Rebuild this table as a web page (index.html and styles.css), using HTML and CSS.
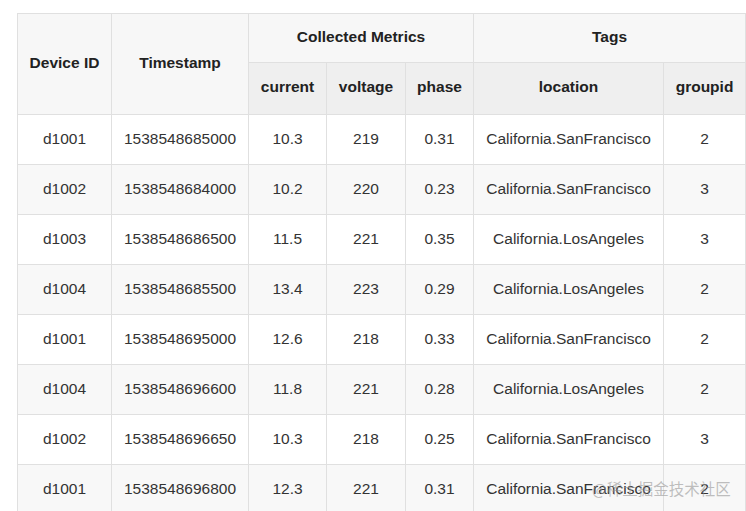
FILE: index.html
```html
<!DOCTYPE html>
<html lang="en">
<head>
<meta charset="utf-8">
<title>Metrics</title>
<link rel="stylesheet" href="styles.css">
</head>
<body>
<div class="page">
  <table class="metrics">
    <colgroup>
      <col class="c-id"><col class="c-ts"><col class="c-cur"><col class="c-volt"><col class="c-phase"><col class="c-loc"><col class="c-grp">
    </colgroup>
    <thead>
      <tr class="h1">
        <th rowspan="2">Device ID</th>
        <th rowspan="2">Timestamp</th>
        <th colspan="3">Collected Metrics</th>
        <th colspan="2">Tags</th>
      </tr>
      <tr class="h2">
        <th>current</th>
        <th>voltage</th>
        <th>phase</th>
        <th>location</th>
        <th>groupid</th>
      </tr>
    </thead>
    <tbody>
      <tr><td>d1001</td><td>1538548685000</td><td>10.3</td><td>219</td><td>0.31</td><td>California.SanFrancisco</td><td>2</td></tr>
      <tr><td>d1002</td><td>1538548684000</td><td>10.2</td><td>220</td><td>0.23</td><td>California.SanFrancisco</td><td>3</td></tr>
      <tr><td>d1003</td><td>1538548686500</td><td>11.5</td><td>221</td><td>0.35</td><td>California.LosAngeles</td><td>3</td></tr>
      <tr><td>d1004</td><td>1538548685500</td><td>13.4</td><td>223</td><td>0.29</td><td>California.LosAngeles</td><td>2</td></tr>
      <tr><td>d1001</td><td>1538548695000</td><td>12.6</td><td>218</td><td>0.33</td><td>California.SanFrancisco</td><td>2</td></tr>
      <tr><td>d1004</td><td>1538548696600</td><td>11.8</td><td>221</td><td>0.28</td><td>California.LosAngeles</td><td>2</td></tr>
      <tr><td>d1002</td><td>1538548696650</td><td>10.3</td><td>218</td><td>0.25</td><td>California.SanFrancisco</td><td>3</td></tr>
      <tr><td>d1001</td><td>1538548696800</td><td>12.3</td><td>221</td><td>0.31</td><td>California.SanFrancisco</td><td>2</td></tr>
    </tbody>
  </table>
  <div class="watermark">@稀土掘金技术社区</div>
</div>
</body>
</html>
```
FILE: styles.css
```css
html, body {
  margin: 0;
  padding: 0;
  background: #fff;
  overflow: hidden;
}
.page {
  position: relative;
  padding: 13px 0 0 17px;
  height: 511px;
  box-sizing: border-box;
  font-family: "Liberation Sans", Arial, sans-serif;
  font-size: 15.5px;
  color: #333;
}
.metrics {
  border-collapse: collapse;
  table-layout: fixed;
  width: 728px;
}
.c-id { width: 94px; }
.c-ts { width: 137px; }
.c-cur { width: 78px; }
.c-volt { width: 79px; }
.c-phase { width: 68px; }
.c-loc { width: 190px; }
.c-grp { width: 82px; }

.metrics th,
.metrics td {
  border: 1px solid #e0e0e0;
  text-align: center;
  line-height: 19px;
  padding: 14px 4px 16px;
  white-space: nowrap;
  overflow: hidden;
}
.metrics th {
  font-weight: bold;
  color: #222;
  background: #f7f7f7;
}
.metrics .h1 th {
  padding-top: 12.5px;
  padding-bottom: 16.5px;
}
.metrics .h2 th {
  background: #efefef;
  padding-top: 14px;
  padding-bottom: 18px;
}
.metrics tbody tr:nth-child(even) td {
  background: #f8f8f8;
}
.metrics tbody tr:nth-child(odd) td {
  background: #fff;
}
.watermark {
  position: absolute;
  left: 592px;
  top: 477px;
  font-family: "Noto Sans CJK SC", "Liberation Sans", sans-serif;
  font-size: 15.5px;
  line-height: 22px;
  color: rgba(150, 150, 150, 0.6);
  white-space: nowrap;
}
```
